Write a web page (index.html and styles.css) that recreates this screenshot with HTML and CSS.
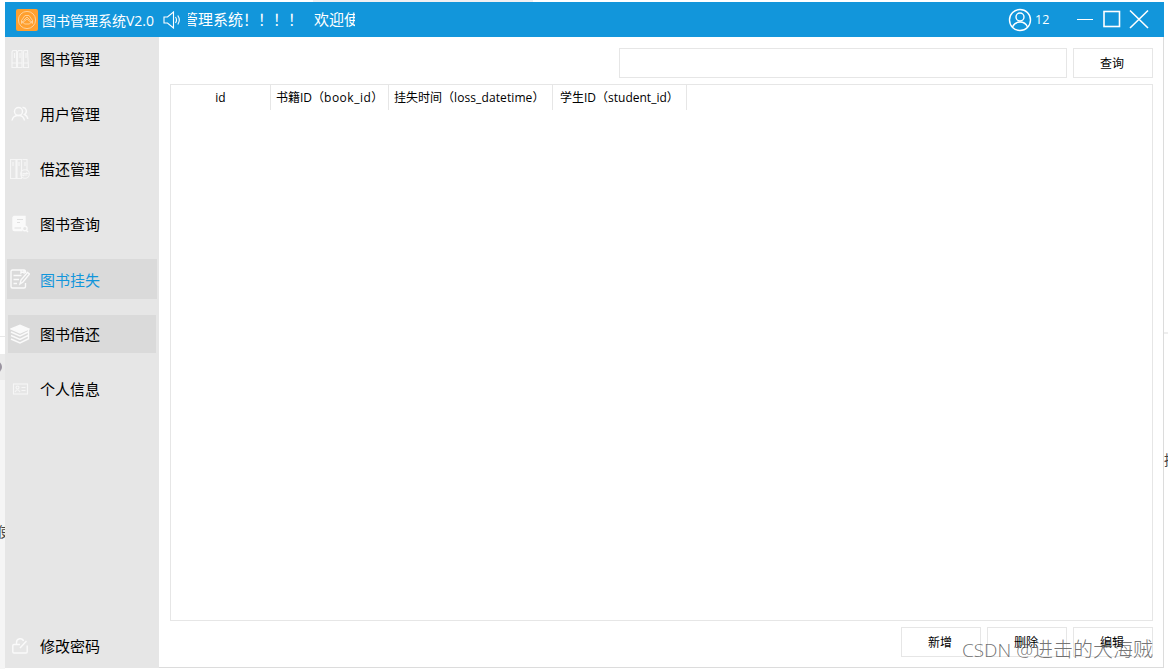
FILE: index.html
```html
<!DOCTYPE html>
<html lang="zh-CN">
<head>
    <meta charset="UTF-8">
    <meta name="viewport" content="width=device-width, initial-scale=1.0">
    <title>图书管理系统V2.0</title>
    <link rel="stylesheet" href="styles.css">
</head>
<body>
    <div class="desktop">
        <div class="back-left">
            <div class="back-line"></div>
            <div class="back-bar"><span class="back-dot"></span></div>
            <div class="back-panel"><span class="back-text">使</span></div>
        </div>

        <div class="window">
            <header class="titlebar">
                <svg class="logo" viewBox="0 0 22 22">
                    <rect width="22" height="22" rx="2" fill="#ffa02f"/>
                    <g fill="none" stroke="#ffd095" stroke-width="1">
                        <circle cx="11" cy="11" r="8.6"/>
                        <path d="M5.500 14.500V11.500L9 6.500h4l3.500 5v3M5.500 14.500L11 10l5.500 4.500M7.500 11.500L11 8l3.500 3.500M5.500 11.500l3 3.500h5l3-3.500"/>
                    </g>
                </svg>
                <span class="title">图书管理系统V2.0</span>
                <svg class="speaker" viewBox="0 0 18 18" fill="none" stroke="#fff" stroke-width="1.1">
                    <path d="M10.500 1v16L4.500 12H1V6h3.500z"/>
                    <path d="M12.500 6q2 3 0 6M14.800 4.500q3 4.500 0 9"/>
                </svg>
                <div class="marquee"><span class="marquee-first">管理系统！！！！</span><span>欢迎使</span></div>
                <svg class="avatar" viewBox="0 0 24 24" fill="none" stroke="#fff" stroke-width="1.4">
                    <circle cx="12" cy="12" r="10.500"/>
                    <circle cx="12" cy="9" r="4"/>
                    <path d="M4.500 19c1.500-3.500 4-5 7.500-5s6 1.500 7.500 5"/>
                </svg>
                <span class="user">12</span>
                <svg class="controls" viewBox="0 0 74 22" fill="none" stroke="#fff" stroke-width="1.6">
                    <path d="M1 10.500h16" stroke-width="1"/>
                    <rect x="28" y="2.500" width="15.500" height="15"/>
                    <path d="M54 1.500l18 17.500M72 1.500L54 19"/>
                </svg>
            </header>

            <div class="main">
                <nav class="sidebar">
                    <a class="item">
                        <svg class="icon faint" viewBox="0 0 20 20">
                            <path d="M3 1.500h3.500v17h-4.500V3zM8.500 1.500H12v17H7.500V3zM14 1.500h3.500L18.500 18.500h-5V3zM4.500 4v5M10 4v5M16 4v5M2 14h4.500M7.500 14H12M13.500 14h5"/>
                        </svg>
                        <span class="label">图书管理</span>
                    </a>
                    <a class="item">
                        <svg class="icon" viewBox="0 0 20 20">
                            <circle cx="8.500" cy="7.500" r="4"/>
                            <path d="M2 16.500c.5-3 3-5 6.500-5s5.500 2 6 5M12.500 3.500c3.500-.5 5.500 4.500 2 7 2 .8 3 2.500 3.300 4.500"/>
                        </svg>
                        <span class="label">用户管理</span>
                    </a>
                    <a class="item">
                        <svg class="icon faint" viewBox="0 0 20 20">
                            <path d="M.5.500H6v19H.500zM7 .500h4.500v19H7zM12.500.500H17v11M3 3v4M9 3v4M15 3v4"/>
                            <circle cx="15" cy="15" r="4.300"/>
                            <path d="M12.500 14.500h5l-1.300-1M17.500 16h-5l1.300 1"/>
                        </svg>
                        <span class="label">借还管理</span>
                    </a>
                    <a class="item">
                        <svg class="icon" viewBox="0 0 20 20">
                            <path class="solid" d="M4 2.500h11v9a4 4 0 0 0-3.500 5H4.500A1.500 1.500 0 0 1 3 15V3.500z"/>
                            <path class="cut" d="M7 5.500h6M7 8.500h3M4.500 14h6.500"/>
                            <circle cx="14.800" cy="14.500" r="2.300"/>
                            <path d="M16.500 16.500l1.500 1.500"/>
                        </svg>
                        <span class="label">图书查询</span>
                    </a>
                    <a class="item active">
                        <svg class="icon" viewBox="0 0 20 20">
                            <path d="M15.500 4V2.500q0-1.500-1.500-1.500H2.500Q1 1 1 2.500v15Q1 19 2.500 19H14q1.500 0 1.500-1.500V14M3.500 6.500h8M3.500 10.500H9M3.500 14.500H7M11 1v3l1.500-1L14 4V1"/>
                            <path d="M10 15l1-4 6.500-7.500L19.500 5 13 13z"/>
                        </svg>
                        <span class="label">图书挂失</span>
                    </a>
                    <a class="item hover">
                        <svg class="icon" viewBox="0 0 20 20">
                            <path class="solid" d="M1 5l9-3.800L19 5l-9 4z"/>
                            <path d="M1 8l9 4 9-4.500M1 11.500l9 4 9-4.500M1 15l9 4 9-4.500M18.500 5v10"/>
                        </svg>
                        <span class="label">图书借还</span>
                    </a>
                    <a class="item">
                        <svg class="icon faint" viewBox="0 0 20 20">
                            <rect x="3.500" y="5" width="14" height="10"/>
                            <circle cx="7.500" cy="8.500" r="1.500"/>
                            <path d="M5 13q2.500-4.500 5 0M11.500 8.500h4M11.500 11.500h4"/>
                        </svg>
                        <span class="label">个人信息</span>
                    </a>
                    <a class="item bottom">
                        <svg class="icon" viewBox="0 0 20 20">
                            <path d="M10 8.500H4q-1.200 0-1.200 1.200v6q0 1.300 1.200 1.300h12q1.200 0 1.200-1.300V9.500M6.500 8V6.500C6.500 2 12.500 1.500 13.500 5M10 12l6.500-7"/>
                        </svg>
                        <span class="label">修改密码</span>
                    </a>
                </nav>

                <section class="content">
                    <div class="search">
                        <input class="search-input" type="text">
                        <button class="btn">查询</button>
                    </div>
                    <div class="table">
                        <div class="th col-id">id</div>
                        <div class="th col-book">书籍ID（<span>book_id</span>）</div>
                        <div class="th col-time">挂失时间（<span>loss_datetime</span>）</div>
                        <div class="th col-student">学生ID（<span>student_id</span>）</div>
                    </div>
                    <div class="actions">
                        <button class="btn">新增</button>
                        <button class="btn">删除</button>
                        <button class="btn">编辑</button>
                    </div>
                </section>
            </div>
        </div>

        <div class="back-right"><span class="back-text">据</span></div>
        <div class="watermark"><span class="watermark-site">CSDN @</span>进击的大海贼</div>
    </div>
</body>
</html>
```
FILE: styles.css
```css
* {
    box-sizing: border-box;
}

body {
    margin: 0;
    background-color: #fff;
    color: #000;
    font-family: "Open Sans", "Noto Sans CJK SC", sans-serif;
    overflow: hidden;
}

.desktop {
    position: relative;
    display: flex;
    width: 1168px;
    height: 669px;
    overflow: hidden;
    background: linear-gradient(#f0f0f2, #f0f0f2) 313px 0 / 220px 2px no-repeat;
}

/* strips of the page behind the window */
.back-left {
    width: 5px;
    display: flex;
    flex-direction: column;
    overflow: hidden;
}

.back-line {
    height: 337px;
    border-bottom: 1px solid #e8e8e8;
}

.back-bar {
    height: 26px;
    margin-top: 17px;
    padding-top: 7px;
    background-color: #ebebeb;
}

.back-dot {
    display: block;
    width: 12px;
    height: 12px;
    margin-left: -10px;
    border-radius: 50%;
    background-color: #9a94a0;
}

.back-panel {
    flex: 1;
    padding-top: 142px;
    background-color: #f5f5f5;
}

.back-text {
    display: block;
    font-size: 14px;
    line-height: 20px;
    color: #444;
}

.back-panel .back-text {
    margin-left: -3px;
    width: 14px;
}

.back-right {
    width: 4px;
    padding-top: 450px;
    overflow: hidden;
    background: linear-gradient(#eee, #eee) 0 332px / 100% 2px no-repeat;
}

/* window */
.window {
    width: 1159px;
    height: 666px;
    margin-top: 2px;
    display: flex;
    flex-direction: column;
}

.titlebar {
    height: 35px;
    display: flex;
    align-items: center;
    padding: 0 14px 0 11px;
    background-color: #1296db;
    color: #fff;
    font-size: 14px;
}

.logo {
    width: 22px;
    height: 22px;
    margin-right: 4px;
}

.title {
    width: 121px;
    white-space: nowrap;
}

.speaker {
    width: 18px;
    height: 18px;
    margin-right: 7px;
}

.marquee {
    width: 167px;
    display: flex;
    gap: 11px;
    padding-bottom: 2px;
    overflow: hidden;
    white-space: nowrap;
    font-size: 15px;
    line-height: 20px;
}

.marquee-first {
    margin-left: -5px;
}

.avatar {
    width: 24px;
    height: 24px;
    margin-left: auto;
}

.user {
    width: 44px;
    padding-left: 3px;
    font-size: 12.5px;
}

.controls {
    width: 74px;
    height: 22px;
}

.main {
    flex: 1;
    display: flex;
}

.sidebar {
    width: 154px;
    display: flex;
    flex-direction: column;
    gap: 17px;
    padding: 3px 3px;
    background-color: #e6e6e6;
}

.item {
    height: 38px;
    display: flex;
    align-items: center;
    gap: 10px;
    padding-left: 2px;
    font-size: 15px;
}

.item.hover {
    background-color: #dadada;
}

.item.active {
    background-color: #dadada;
    box-shadow: 0 0 0 1px #dadada;
    color: #1296db;
}

.item.bottom {
    margin-top: auto;
}

.label {
    padding-bottom: 2px;
}

.active .label {
    padding-bottom: 0;
}

.icon {
    width: 20px;
    height: 20px;
    fill: none;
    stroke: #fafafa;
    stroke-width: 1.4;
}

.icon.faint {
    stroke: #f6f6f6;
    stroke-width: 1.1;
}

.icon .solid {
    fill: #fafafa;
}

.icon .cut {
    stroke: #e0e0e0;
    stroke-width: 1;
}

.content {
    flex: 1;
    display: flex;
    flex-direction: column;
    padding: 11px 10px 10px 11px;
    border-right: 1px solid #dcdcdc;
    border-bottom: 1px solid #dcdcdc;
    background-color: #fff;
}

.search {
    display: flex;
    justify-content: flex-end;
    gap: 6px;
}

.search-input {
    width: 448px;
    height: 30px;
    border: 1px solid #e6e6e6;
    outline: none;
}

.btn {
    width: 80px;
    height: 30px;
    padding: 0 2px 0 0;
    border: 1px solid #e6e6e6;
    background-color: #fff;
    color: #000;
    font-family: inherit;
    font-size: 12px;
}

.table {
    height: 537px;
    margin: 6px 0;
    display: flex;
    align-items: flex-start;
    border: 1px solid #e6e6e6;
}

.th {
    height: 25px;
    border-right: 1px solid #e6e6e6;
    font-size: 12px;
    line-height: 25px;
    white-space: nowrap;
}

.col-id {
    width: 100px;
    text-align: center;
}

.col-book {
    width: 118px;
    padding-left: 5px;
}

.col-book span {
    letter-spacing: 0.5px;
}

.col-time {
    width: 164px;
    padding-left: 5px;
}

.col-time span {
    letter-spacing: 0.1px;
}

.col-student {
    width: 134px;
    padding-left: 7px;
}

.actions {
    display: flex;
    justify-content: flex-end;
    gap: 6px;
}

.watermark {
    position: absolute;
    right: 15px;
    bottom: 5px;
    font-size: 20px;
    font-weight: 300;
    line-height: 28px;
    color: rgba(80, 80, 80, 0.8);
    white-space: nowrap;
}

.watermark-site {
    font-size: 19px;
}
```
